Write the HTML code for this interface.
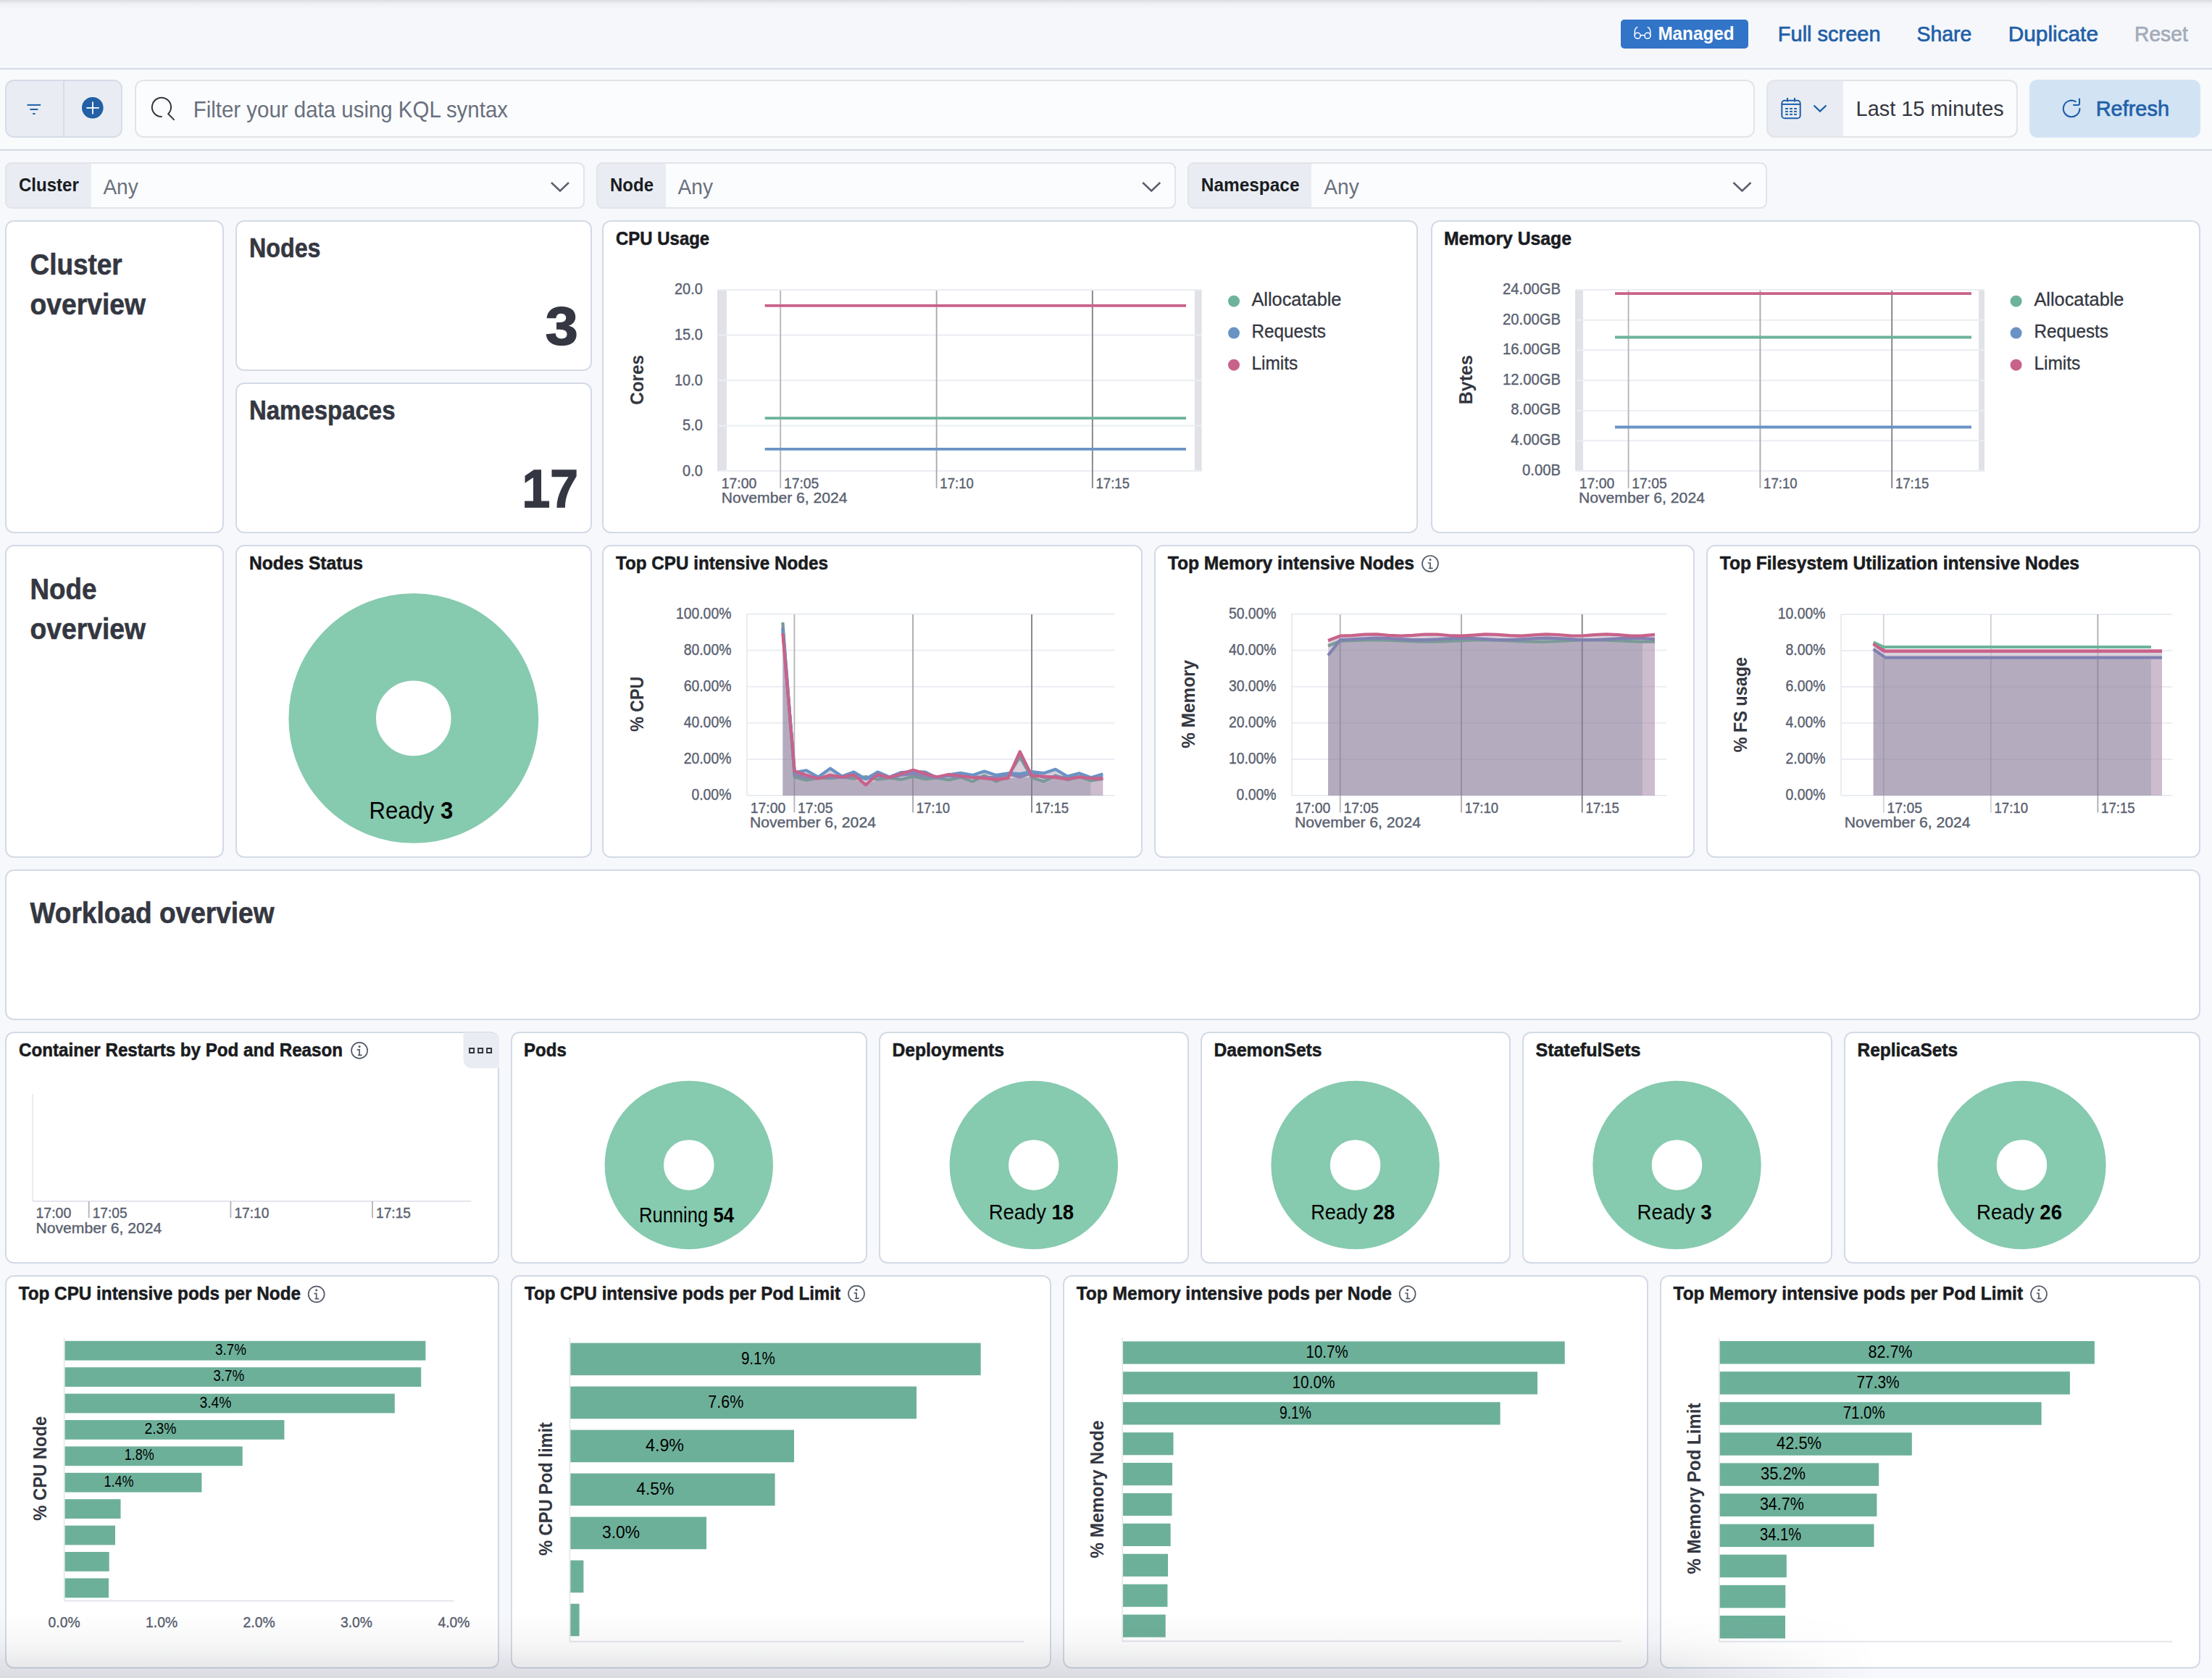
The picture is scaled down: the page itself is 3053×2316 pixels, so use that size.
<!DOCTYPE html><html><head><meta charset="utf-8"><title>Kubernetes Overview</title><style>
html,body{margin:0;padding:0;}
body{width:3053px;height:2316px;overflow:hidden;position:relative;background:#f7f8fc;font-family:"Liberation Sans", sans-serif;}
.abs{position:absolute;}
.panel{position:absolute;background:#fff;border-radius:12px;box-shadow:inset 0 0 0 2px #d3dae6;}
svg{display:block;font-family:"Liberation Sans", sans-serif;}
#hdr{position:absolute;left:0;top:0;width:3053px;height:94px;background:#f6f7fa;border-bottom:2px solid #d3dae6;}
#hdr::before{content:"";position:absolute;left:0;top:0;right:0;height:12px;background:linear-gradient(to bottom,rgba(60,64,80,0.15),rgba(60,64,80,0.04) 40%,rgba(60,64,80,0));}
#qbar{position:absolute;left:0;top:96px;width:3053px;height:110px;background:#f9fafc;border-bottom:2px solid #d3dae6;}
#fade{position:absolute;left:0;top:2226px;width:2720px;height:90px;pointer-events:none;
  background:linear-gradient(to bottom,rgba(40,45,60,0) 0%,rgba(40,45,60,0.035) 45%,rgba(40,45,60,0.14) 100%);
  -webkit-mask-image:linear-gradient(to right,#000 0,#000 2260px,rgba(0,0,0,0.5) 2410px,transparent 2590px);
  mask-image:linear-gradient(to right,#000 0,#000 2260px,rgba(0,0,0,0.5) 2410px,transparent 2590px);}
</style></head><body><div id="hdr"></div><div id="qbar"></div><div class="abs" style="left:2200px;top:0px;width:853px;height:95px;"><svg width="853" height="95" viewBox="2200 0 853 95"><rect x="2237.0" y="27.0" width="176.0" height="40.0" fill="#3274c8" rx="5" /><g fill="none" stroke="#fff" stroke-width="1.5" stroke-linecap="round"><circle cx="2260.2" cy="49.3" r="4.0"/><circle cx="2273.9" cy="49.3" r="4.0"/><path d="M2264.2 49.3 Q2267.05 47.6 2269.9 49.3"/><path d="M2256.3 49.3 V43.5 Q2256.6 38.6 2259.8 37.6"/><path d="M2277.8 49.3 V43.5 Q2277.5 38.6 2274.3 37.6"/></g><text x="2288.4" y="54.8" font-size="25.58" fill="#ffffff" font-weight="700" textLength="105.2" lengthAdjust="spacingAndGlyphs">Managed</text><text x="2453.8" y="57.0" font-size="29.94" fill="#1f5fa8" textLength="141.8" lengthAdjust="spacingAndGlyphs" stroke="#1f5fa8" stroke-width="0.7">Full screen</text><text x="2645.5" y="57.0" font-size="29.94" fill="#1f5fa8" textLength="75.9" lengthAdjust="spacingAndGlyphs" stroke="#1f5fa8" stroke-width="0.7">Share</text><text x="2771.7" y="57.0" font-size="29.94" fill="#1f5fa8" textLength="124.3" lengthAdjust="spacingAndGlyphs" stroke="#1f5fa8" stroke-width="0.7">Duplicate</text><text x="2946.0" y="57.0" font-size="29.94" fill="#a2abba" textLength="73.8" lengthAdjust="spacingAndGlyphs" stroke="#a2abba" stroke-width="0.7">Reset</text></svg></div><div class="abs" style="left:0px;top:96px;width:3053px;height:110px;"><svg width="3053" height="110" viewBox="0 96 3053 110"><rect x="8.0" y="111.0" width="160.0" height="78.0" fill="#e9edf3" rx="11" stroke="#d5dbe7" stroke-width="1.8"/><line x1="88.0" y1="111.0" x2="88.0" y2="189.0" stroke="#d5dbe7" stroke-width="1.8" /><line x1="37.5" y1="144.9" x2="56.2" y2="144.9" stroke="#1f5fa8" stroke-width="2.0" /><line x1="41.4" y1="151.0" x2="52.3" y2="151.0" stroke="#1f5fa8" stroke-width="2.0" /><line x1="45.2" y1="157.0" x2="48.6" y2="157.0" stroke="#1f5fa8" stroke-width="2.0" /><circle cx="127.8" cy="148.8" r="14.8" fill="#2360a5"/><line x1="119.3" y1="148.9" x2="136.7" y2="148.9" stroke="#fff" stroke-width="1.8" /><line x1="128.0" y1="140.4" x2="128.0" y2="157.4" stroke="#fff" stroke-width="1.8" /><rect x="187.0" y="111.0" width="2234.0" height="78.0" fill="#fbfcfd" rx="11" stroke="#e3e4e8" stroke-width="2"/><path d="M222.9 161 A13.1 13.1 0 1 1 232.2 157.2 L240 165.1" fill="none" stroke="#343741" stroke-width="2" stroke-linecap="round" stroke-linejoin="miter"/><text x="266.7" y="161.5" font-size="30.96" fill="#69707d" textLength="434.3" lengthAdjust="spacingAndGlyphs">Filter your data using KQL syntax</text><rect x="2439.0" y="111.0" width="345.0" height="78.0" fill="#fbfcfd" rx="11" stroke="#e3e4e8" stroke-width="2"/><path d="M2450 111 H2544 V189 H2450 A11 11 0 0 1 2439 178 V122 A11 11 0 0 1 2450 111 Z" fill="#e9edf3"/><rect x="2439.0" y="111.0" width="345.0" height="78.0" fill="none" rx="11" stroke="#e3e4e8" stroke-width="2"/><g fill="none" stroke="#1f5fa8" stroke-width="2"><rect x="2459.3" y="138.8" width="25.4" height="24.4" rx="3.8"/><line x1="2459.3" y1="143.9" x2="2484.7" y2="143.9"/><line x1="2467" y1="135" x2="2467" y2="140.6"/><line x1="2477" y1="135" x2="2477" y2="140.6"/></g><rect x="2464.1" y="149.0" width="3.8" height="2.0" fill="#1f5fa8" /><rect x="2470.1" y="149.0" width="3.8" height="2.0" fill="#1f5fa8" /><rect x="2476.1" y="149.0" width="3.8" height="2.0" fill="#1f5fa8" /><rect x="2464.1" y="152.9" width="3.8" height="2.0" fill="#1f5fa8" /><rect x="2470.1" y="152.9" width="3.8" height="2.0" fill="#1f5fa8" /><rect x="2476.1" y="152.9" width="3.8" height="2.0" fill="#1f5fa8" /><rect x="2464.1" y="156.9" width="3.8" height="2.0" fill="#1f5fa8" /><rect x="2470.1" y="156.9" width="3.8" height="2.0" fill="#1f5fa8" /><rect x="2476.1" y="156.9" width="3.8" height="2.0" fill="#1f5fa8" /><path d="M2503.5 145.5 L2512 153.5 L2520.5 145.5" fill="none" stroke="#1f5fa8" stroke-width="2.4"/><text x="2561.6" y="160.0" font-size="29.94" fill="#343741" textLength="204.1" lengthAdjust="spacingAndGlyphs">Last 15 minutes</text><rect x="2801.0" y="110.0" width="236.0" height="80.0" fill="#d2e3f4" rx="11" /><path d="M2870.4 150 A11.3 11.3 0 1 1 2864.75 140.2" fill="none" stroke="#1f5fa8" stroke-width="2.1" stroke-linecap="round"/><path d="M2870 136.5 V143 Q2870 145 2868 145 H2862" fill="none" stroke="#1f5fa8" stroke-width="2.1" stroke-linecap="round"/><text x="2892.7" y="160.0" font-size="29.94" fill="#1f5fa8" textLength="101.3" lengthAdjust="spacingAndGlyphs" stroke="#1f5fa8" stroke-width="0.7">Refresh</text></svg></div><div class="abs" style="left:0px;top:206px;width:3053px;height:94px;"><svg width="3053" height="94" viewBox="0 206 3053 94"><rect x="8.0" y="225.0" width="798.0" height="62.0" fill="#fbfcfd" rx="8" stroke="#e3e4e8" stroke-width="2"/><path d="M16 225 H126 V287 H16 A8 8 0 0 1 8 279 V233 A8 8 0 0 1 16 225 Z" fill="#e9edf3"/><rect x="8.0" y="225.0" width="798.0" height="62.0" fill="none" rx="8" stroke="#e3e4e8" stroke-width="2"/><text x="26.0" y="264.4" font-size="26.16" fill="#1a1c21" font-weight="700" textLength="82.8" lengthAdjust="spacingAndGlyphs">Cluster</text><text x="142.4" y="268.2" font-size="29.36" fill="#69707d" textLength="48.4" lengthAdjust="spacingAndGlyphs">Any</text><path d="M761.0 252 L773.0 263.5 L785.0 252" fill="none" stroke="#5a606b" stroke-width="2.6"/><rect x="824.0" y="225.0" width="798.0" height="62.0" fill="#fbfcfd" rx="8" stroke="#e3e4e8" stroke-width="2"/><path d="M832 225 H919 V287 H832 A8 8 0 0 1 824 279 V233 A8 8 0 0 1 832 225 Z" fill="#e9edf3"/><rect x="824.0" y="225.0" width="798.0" height="62.0" fill="none" rx="8" stroke="#e3e4e8" stroke-width="2"/><text x="842.0" y="264.4" font-size="26.16" fill="#1a1c21" font-weight="700" textLength="60.0" lengthAdjust="spacingAndGlyphs">Node</text><text x="935.6" y="268.2" font-size="29.36" fill="#69707d" textLength="48.4" lengthAdjust="spacingAndGlyphs">Any</text><path d="M1577.2 252 L1589.2 263.5 L1601.2 252" fill="none" stroke="#5a606b" stroke-width="2.6"/><rect x="1640.0" y="225.0" width="798.0" height="62.0" fill="#fbfcfd" rx="8" stroke="#e3e4e8" stroke-width="2"/><path d="M1648 225 H1810 V287 H1648 A8 8 0 0 1 1640 279 V233 A8 8 0 0 1 1648 225 Z" fill="#e9edf3"/><rect x="1640.0" y="225.0" width="798.0" height="62.0" fill="none" rx="8" stroke="#e3e4e8" stroke-width="2"/><text x="1657.8" y="264.4" font-size="26.16" fill="#1a1c21" font-weight="700" textLength="135.7" lengthAdjust="spacingAndGlyphs">Namespace</text><text x="1827.3" y="268.2" font-size="29.36" fill="#69707d" textLength="48.4" lengthAdjust="spacingAndGlyphs">Any</text><path d="M2392.5 252 L2404.5 263.5 L2416.5 252" fill="none" stroke="#5a606b" stroke-width="2.6"/></svg></div><div class="panel" style="left:7px;top:304px;width:302px;height:432px;"><svg width="302" height="432" viewBox="7 304 302 432"><text x="41.5" y="379.0" font-size="39.97" fill="#343741" font-weight="700" textLength="127.2" lengthAdjust="spacingAndGlyphs" stroke="#343741" stroke-width="0.6">Cluster</text><text x="41.5" y="434.0" font-size="39.97" fill="#343741" font-weight="700" textLength="159.5" lengthAdjust="spacingAndGlyphs" stroke="#343741" stroke-width="0.6">overview</text></svg></div><div class="panel" style="left:325px;top:304px;width:492px;height:208px;"><svg width="492" height="208" viewBox="325 304 492 208"><text x="344.0" y="354.5" font-size="37.06" fill="#343741" font-weight="700" textLength="98.5" lengthAdjust="spacingAndGlyphs" stroke="#343741" stroke-width="0.6">Nodes</text><text x="797.8" y="476.4" font-size="74.85" fill="#343741" font-weight="700" text-anchor="end" textLength="45.0" lengthAdjust="spacingAndGlyphs" stroke="#343741" stroke-width="1.6">3</text></svg></div><div class="panel" style="left:325px;top:528px;width:492px;height:208px;"><svg width="492" height="208" viewBox="325 528 492 208"><text x="344.0" y="579.0" font-size="37.06" fill="#343741" font-weight="700" textLength="201.5" lengthAdjust="spacingAndGlyphs" stroke="#343741" stroke-width="0.6">Namespaces</text><text x="798.0" y="699.6" font-size="74.85" fill="#343741" font-weight="700" text-anchor="end" textLength="77.5" lengthAdjust="spacingAndGlyphs" stroke="#343741" stroke-width="1.6">17</text></svg></div><div class="panel" style="left:831px;top:304px;width:1126px;height:432px;"><svg width="1126" height="432" viewBox="831 304 1126 432"><text x="850.0" y="337.8" font-size="25.87" fill="#1a1c21" font-weight="700" textLength="129.2" lengthAdjust="spacingAndGlyphs" stroke="#1a1c21" stroke-width="0.55">CPU Usage</text><rect x="991.0" y="400.0" width="12.0" height="250.0" fill="#e0e2e7" /><rect x="1649.0" y="400.0" width="9.6" height="250.0" fill="#e0e2e7" /><line x1="991.0" y1="400.0" x2="1658.6" y2="400.0" stroke="#eaedf2" stroke-width="2" /><line x1="991.0" y1="462.5" x2="1658.6" y2="462.5" stroke="#eaedf2" stroke-width="2" /><line x1="991.0" y1="525.0" x2="1658.6" y2="525.0" stroke="#eaedf2" stroke-width="2" /><line x1="991.0" y1="587.5" x2="1658.6" y2="587.5" stroke="#eaedf2" stroke-width="2" /><line x1="991.0" y1="650.0" x2="1658.6" y2="650.0" stroke="#eaedf2" stroke-width="2" /><line x1="991.0" y1="400.0" x2="991.0" y2="650.0" stroke="#d9dde5" stroke-width="1.5" /><text x="995.7" y="673.7" font-size="20.93" fill="#5a6170" textLength="48.5" lengthAdjust="spacingAndGlyphs" stroke="#5a6170" stroke-width="0.4">17:00</text><line x1="1077.2" y1="401.0" x2="1077.2" y2="673.7" stroke="#b3b4b8" stroke-width="1.8" /><text x="1081.9" y="673.7" font-size="20.93" fill="#5a6170" textLength="48.5" lengthAdjust="spacingAndGlyphs" stroke="#5a6170" stroke-width="0.4">17:05</text><line x1="1292.6" y1="401.0" x2="1292.6" y2="673.7" stroke="#a7a8ac" stroke-width="1.8" /><text x="1297.3" y="673.7" font-size="20.93" fill="#5a6170" textLength="46.5" lengthAdjust="spacingAndGlyphs" stroke="#5a6170" stroke-width="0.4">17:10</text><line x1="1507.8" y1="401.0" x2="1507.8" y2="673.7" stroke="#7d7e83" stroke-width="1.8" /><text x="1512.5" y="673.7" font-size="20.93" fill="#5a6170" textLength="46.5" lengthAdjust="spacingAndGlyphs" stroke="#5a6170" stroke-width="0.4">17:15</text><text x="995.7" y="693.8" font-size="20.93" fill="#5a6170" textLength="173.9" lengthAdjust="spacingAndGlyphs" stroke="#5a6170" stroke-width="0.4">November 6, 2024</text><polyline points="1055.7,421.8 1637.0,421.8" fill="none" stroke="#c8628a" stroke-width="3.8" stroke-linejoin="round" /><polyline points="1055.7,577.2 1637.0,577.2" fill="none" stroke="#6db39a" stroke-width="3.8" stroke-linejoin="round" /><polyline points="1055.7,619.8 1637.0,619.8" fill="none" stroke="#6993c4" stroke-width="3.8" stroke-linejoin="round" /><text x="969.8" y="405.9" font-size="21.66" fill="#5a6170" text-anchor="end" textLength="38.8" lengthAdjust="spacingAndGlyphs" stroke="#5a6170" stroke-width="0.4">20.0</text><text x="969.8" y="468.9" font-size="21.66" fill="#5a6170" text-anchor="end" textLength="38.8" lengthAdjust="spacingAndGlyphs" stroke="#5a6170" stroke-width="0.4">15.0</text><text x="969.8" y="531.5" font-size="21.66" fill="#5a6170" text-anchor="end" textLength="38.8" lengthAdjust="spacingAndGlyphs" stroke="#5a6170" stroke-width="0.4">10.0</text><text x="969.8" y="594.0" font-size="21.66" fill="#5a6170" text-anchor="end" textLength="27.7" lengthAdjust="spacingAndGlyphs" stroke="#5a6170" stroke-width="0.4">5.0</text><text x="969.8" y="656.5" font-size="21.66" fill="#5a6170" text-anchor="end" textLength="27.7" lengthAdjust="spacingAndGlyphs" stroke="#5a6170" stroke-width="0.4">0.0</text><text transform="translate(888.3,524.4) rotate(-90)" x="0" y="0" font-size="26.45" font-weight="700" fill="#343741" text-anchor="middle" textLength="68.9" lengthAdjust="spacingAndGlyphs">Cores</text><circle cx="1703" cy="415.7" r="8" fill="#6db39a"/><text x="1727.4" y="421.9" font-size="25.44" fill="#343741" textLength="124.1" lengthAdjust="spacingAndGlyphs" stroke="#343741" stroke-width="0.3">Allocatable</text><circle cx="1703" cy="459.6" r="8" fill="#6993c4"/><text x="1727.4" y="466.2" font-size="25.44" fill="#343741" textLength="102.5" lengthAdjust="spacingAndGlyphs" stroke="#343741" stroke-width="0.3">Requests</text><circle cx="1703" cy="503.7" r="8" fill="#c8628a"/><text x="1727.4" y="510.1" font-size="25.44" fill="#343741" textLength="63.9" lengthAdjust="spacingAndGlyphs" stroke="#343741" stroke-width="0.3">Limits</text></svg></div><div class="panel" style="left:1975px;top:304px;width:1062px;height:432px;"><svg width="1062" height="432" viewBox="1975 304 1062 432"><text x="1993.0" y="337.8" font-size="25.87" fill="#1a1c21" font-weight="700" textLength="176.0" lengthAdjust="spacingAndGlyphs" stroke="#1a1c21" stroke-width="0.55">Memory Usage</text><rect x="2175.0" y="400.0" width="10.0" height="250.0" fill="#e0e2e7" /><rect x="2731.0" y="400.0" width="8.0" height="250.0" fill="#e0e2e7" /><line x1="2175.0" y1="400.0" x2="2739.0" y2="400.0" stroke="#eaedf2" stroke-width="2" /><line x1="2175.0" y1="441.7" x2="2739.0" y2="441.7" stroke="#eaedf2" stroke-width="2" /><line x1="2175.0" y1="483.3" x2="2739.0" y2="483.3" stroke="#eaedf2" stroke-width="2" /><line x1="2175.0" y1="525.0" x2="2739.0" y2="525.0" stroke="#eaedf2" stroke-width="2" /><line x1="2175.0" y1="566.7" x2="2739.0" y2="566.7" stroke="#eaedf2" stroke-width="2" /><line x1="2175.0" y1="608.3" x2="2739.0" y2="608.3" stroke="#eaedf2" stroke-width="2" /><line x1="2175.0" y1="650.0" x2="2739.0" y2="650.0" stroke="#eaedf2" stroke-width="2" /><line x1="2175.0" y1="400.0" x2="2175.0" y2="650.0" stroke="#d9dde5" stroke-width="1.5" /><text x="2179.7" y="673.7" font-size="20.93" fill="#5a6170" textLength="48.5" lengthAdjust="spacingAndGlyphs" stroke="#5a6170" stroke-width="0.4">17:00</text><line x1="2247.6" y1="401.0" x2="2247.6" y2="673.7" stroke="#b3b4b8" stroke-width="1.8" /><text x="2252.3" y="673.7" font-size="20.93" fill="#5a6170" textLength="48.5" lengthAdjust="spacingAndGlyphs" stroke="#5a6170" stroke-width="0.4">17:05</text><line x1="2429.4" y1="401.0" x2="2429.4" y2="673.7" stroke="#a7a8ac" stroke-width="1.8" /><text x="2434.1" y="673.7" font-size="20.93" fill="#5a6170" textLength="46.5" lengthAdjust="spacingAndGlyphs" stroke="#5a6170" stroke-width="0.4">17:10</text><line x1="2611.2" y1="401.0" x2="2611.2" y2="673.7" stroke="#7d7e83" stroke-width="1.8" /><text x="2615.9" y="673.7" font-size="20.93" fill="#5a6170" textLength="46.5" lengthAdjust="spacingAndGlyphs" stroke="#5a6170" stroke-width="0.4">17:15</text><text x="2179.0" y="693.8" font-size="20.93" fill="#5a6170" textLength="173.9" lengthAdjust="spacingAndGlyphs" stroke="#5a6170" stroke-width="0.4">November 6, 2024</text><polyline points="2229.0,405.2 2721.0,405.2" fill="none" stroke="#c8628a" stroke-width="3.8" stroke-linejoin="round" /><polyline points="2229.0,465.5 2721.0,465.5" fill="none" stroke="#6db39a" stroke-width="3.8" stroke-linejoin="round" /><polyline points="2229.0,589.5 2721.0,589.5" fill="none" stroke="#6993c4" stroke-width="3.8" stroke-linejoin="round" /><text x="2154.0" y="406.1" font-size="21.66" fill="#5a6170" text-anchor="end" textLength="79.9" lengthAdjust="spacingAndGlyphs" stroke="#5a6170" stroke-width="0.4">24.00GB</text><text x="2154.0" y="447.7" font-size="21.66" fill="#5a6170" text-anchor="end" textLength="79.9" lengthAdjust="spacingAndGlyphs" stroke="#5a6170" stroke-width="0.4">20.00GB</text><text x="2154.0" y="489.2" font-size="21.66" fill="#5a6170" text-anchor="end" textLength="79.9" lengthAdjust="spacingAndGlyphs" stroke="#5a6170" stroke-width="0.4">16.00GB</text><text x="2154.0" y="530.8" font-size="21.66" fill="#5a6170" text-anchor="end" textLength="79.9" lengthAdjust="spacingAndGlyphs" stroke="#5a6170" stroke-width="0.4">12.00GB</text><text x="2154.0" y="572.4" font-size="21.66" fill="#5a6170" text-anchor="end" textLength="68.7" lengthAdjust="spacingAndGlyphs" stroke="#5a6170" stroke-width="0.4">8.00GB</text><text x="2154.0" y="613.9" font-size="21.66" fill="#5a6170" text-anchor="end" textLength="68.7" lengthAdjust="spacingAndGlyphs" stroke="#5a6170" stroke-width="0.4">4.00GB</text><text x="2154.0" y="655.5" font-size="21.66" fill="#5a6170" text-anchor="end" textLength="52.9" lengthAdjust="spacingAndGlyphs" stroke="#5a6170" stroke-width="0.4">0.00B</text><text transform="translate(2031.6,524.2) rotate(-90)" x="0" y="0" font-size="26.45" font-weight="700" fill="#343741" text-anchor="middle" textLength="68.2" lengthAdjust="spacingAndGlyphs">Bytes</text><circle cx="2782.6" cy="415.7" r="8" fill="#6db39a"/><text x="2807.4" y="421.9" font-size="25.44" fill="#343741" textLength="124.1" lengthAdjust="spacingAndGlyphs" stroke="#343741" stroke-width="0.3">Allocatable</text><circle cx="2782.6" cy="459.6" r="8" fill="#6993c4"/><text x="2807.4" y="466.2" font-size="25.44" fill="#343741" textLength="102.5" lengthAdjust="spacingAndGlyphs" stroke="#343741" stroke-width="0.3">Requests</text><circle cx="2782.6" cy="503.7" r="8" fill="#c8628a"/><text x="2807.4" y="510.1" font-size="25.44" fill="#343741" textLength="63.9" lengthAdjust="spacingAndGlyphs" stroke="#343741" stroke-width="0.3">Limits</text></svg></div><div class="panel" style="left:7px;top:752px;width:302px;height:432px;"><svg width="302" height="432" viewBox="7 752 302 432"><text x="41.5" y="827.0" font-size="39.97" fill="#343741" font-weight="700" textLength="91.9" lengthAdjust="spacingAndGlyphs" stroke="#343741" stroke-width="0.6">Node</text><text x="41.5" y="882.0" font-size="39.97" fill="#343741" font-weight="700" textLength="159.5" lengthAdjust="spacingAndGlyphs" stroke="#343741" stroke-width="0.6">overview</text></svg></div><div class="panel" style="left:325px;top:752px;width:492px;height:432px;"><svg width="492" height="432" viewBox="325 752 492 432"><text x="344.0" y="786.0" font-size="25.87" fill="#1a1c21" font-weight="700" textLength="157.0" lengthAdjust="spacingAndGlyphs" stroke="#1a1c21" stroke-width="0.55">Nodes Status</text><circle cx="570.8" cy="991.4" r="112.10" fill="none" stroke="#86caaf" stroke-width="120.60"/><text x="567.4" y="1130.4" font-size="33.14" fill="#000" text-anchor="middle" textLength="115.8" lengthAdjust="spacingAndGlyphs">Ready <tspan font-weight="700">3</tspan></text></svg></div><div class="panel" style="left:831px;top:752px;width:746px;height:432px;"><svg width="746" height="432" viewBox="831 752 746 432"><text x="850.0" y="786.0" font-size="25.87" fill="#1a1c21" font-weight="700" textLength="293.0" lengthAdjust="spacingAndGlyphs" stroke="#1a1c21" stroke-width="0.55">Top CPU intensive Nodes</text><line x1="1031.0" y1="847.5" x2="1538.6" y2="847.5" stroke="#eaedf2" stroke-width="2" /><line x1="1031.0" y1="897.6" x2="1538.6" y2="897.6" stroke="#eaedf2" stroke-width="2" /><line x1="1031.0" y1="947.7" x2="1538.6" y2="947.7" stroke="#eaedf2" stroke-width="2" /><line x1="1031.0" y1="997.8" x2="1538.6" y2="997.8" stroke="#eaedf2" stroke-width="2" /><line x1="1031.0" y1="1047.9" x2="1538.6" y2="1047.9" stroke="#eaedf2" stroke-width="2" /><line x1="1031.0" y1="1098.0" x2="1538.6" y2="1098.0" stroke="#eaedf2" stroke-width="2" /><line x1="1031.0" y1="847.5" x2="1031.0" y2="1098.0" stroke="#e3e6ec" stroke-width="1.5" /><text x="1035.7" y="1121.5" font-size="20.93" fill="#5a6170" textLength="48.5" lengthAdjust="spacingAndGlyphs" stroke="#5a6170" stroke-width="0.4">17:00</text><line x1="1096.4" y1="848.0" x2="1096.4" y2="1121.5" stroke="#b3b4b8" stroke-width="1.8" /><text x="1101.1" y="1121.5" font-size="20.93" fill="#5a6170" textLength="48.5" lengthAdjust="spacingAndGlyphs" stroke="#5a6170" stroke-width="0.4">17:05</text><line x1="1260.0" y1="848.0" x2="1260.0" y2="1121.5" stroke="#a7a8ac" stroke-width="1.8" /><text x="1264.7" y="1121.5" font-size="20.93" fill="#5a6170" textLength="46.5" lengthAdjust="spacingAndGlyphs" stroke="#5a6170" stroke-width="0.4">17:10</text><line x1="1424.0" y1="848.0" x2="1424.0" y2="1121.5" stroke="#7d7e83" stroke-width="1.8" /><text x="1428.7" y="1121.5" font-size="20.93" fill="#5a6170" textLength="46.5" lengthAdjust="spacingAndGlyphs" stroke="#5a6170" stroke-width="0.4">17:15</text><text x="1035.0" y="1141.5" font-size="20.93" fill="#5a6170" textLength="173.9" lengthAdjust="spacingAndGlyphs" stroke="#5a6170" stroke-width="0.4">November 6, 2024</text><polygon points="1080.3,859.0 1096.7,1064.4 1113.0,1063.3 1129.4,1072.5 1145.8,1060.6 1162.1,1071.5 1178.5,1065.5 1194.9,1072.0 1211.3,1065.5 1227.6,1072.5 1244.0,1066.0 1260.4,1062.8 1276.7,1065.5 1293.1,1072.0 1309.5,1068.8 1325.8,1066.7 1342.2,1069.9 1358.6,1064.5 1375.0,1069.9 1391.3,1067.2 1407.7,1037.4 1424.1,1065.0 1440.4,1067.2 1456.8,1061.8 1473.2,1071.5 1489.5,1067.2 1505.9,1073.2 1522.3,1068.3 1522.3,1075.0 1505.9,1077.5 1489.5,1072.6 1473.2,1076.4 1456.8,1073.2 1440.4,1078.6 1424.1,1073.2 1407.7,1072.6 1391.3,1074.2 1375.0,1078.6 1358.6,1074.2 1342.2,1078.6 1325.8,1072.6 1309.5,1076.4 1293.1,1073.6 1276.7,1075.3 1260.4,1071.5 1244.0,1075.8 1227.6,1073.6 1211.3,1075.8 1194.9,1083.4 1178.5,1074.7 1162.1,1073.0 1145.8,1074.2 1129.4,1074.7 1113.0,1076.9 1096.7,1072.5 1080.3,874.0" fill="rgb(192,177,197)" fill-opacity="0.6"/><polygon points="1080.3,874.0 1096.7,1072.5 1113.0,1076.9 1129.4,1074.7 1145.8,1074.2 1162.1,1073.0 1178.5,1074.7 1194.9,1083.4 1211.3,1075.8 1227.6,1073.6 1244.0,1075.8 1260.4,1071.5 1276.7,1075.3 1293.1,1073.6 1309.5,1076.4 1325.8,1072.6 1342.2,1078.6 1358.6,1074.2 1375.0,1078.6 1391.3,1074.2 1407.7,1072.6 1424.1,1073.2 1440.4,1078.6 1456.8,1073.2 1473.2,1076.4 1489.5,1072.6 1505.8,1077.5 1505.8,1098.0 1080.3,1098.0" fill="rgb(130,117,147)" fill-opacity="0.6"/><polygon points="1505.8,1077.5 1505.9,1077.5 1522.3,1075.0 1522.3,1098.0 1505.8,1098.0" fill="rgb(172,143,172)" fill-opacity="0.6"/><polyline points="1080.3,859.0 1096.7,1072.5 1113.0,1076.9 1129.4,1073.6 1145.8,1074.2 1162.1,1072.5 1178.5,1074.7 1194.9,1072.0 1211.3,1075.8 1227.6,1073.6 1244.0,1075.8 1260.4,1071.5 1276.7,1075.3 1293.1,1073.6 1309.5,1076.4 1325.8,1072.6 1342.2,1078.6 1358.6,1070.4 1375.0,1078.6 1391.3,1071.0 1407.7,1045.0 1424.1,1073.2 1440.4,1078.6 1456.8,1070.4 1473.2,1076.4 1489.5,1072.1 1505.9,1077.5 1522.3,1075.0" fill="none" stroke="#7a9899" stroke-width="4.2" stroke-linejoin="round" /><polyline points="1080.3,866.0 1096.7,1069.0 1113.0,1073.0 1129.4,1074.0 1145.8,1072.0 1162.1,1073.0 1178.5,1071.0 1194.9,1075.0 1211.3,1071.0 1227.6,1073.0 1244.0,1070.0 1260.4,1068.0 1276.7,1071.0 1293.1,1072.0 1309.5,1071.0 1325.8,1072.0 1342.2,1072.0 1358.6,1073.0 1375.0,1073.0 1391.3,1068.0 1407.7,1072.6 1424.1,1066.7 1440.4,1073.0 1456.8,1072.0 1473.2,1073.0 1489.5,1072.0 1505.9,1074.0 1522.3,1073.0" fill="none" stroke="#8a83b3" stroke-width="4.2" stroke-linejoin="round" /><polyline points="1080.3,868.0 1096.7,1066.0 1113.0,1063.3 1129.4,1072.5 1145.8,1060.6 1162.1,1071.5 1178.5,1065.5 1194.9,1075.3 1211.3,1065.5 1227.6,1072.5 1244.0,1066.0 1260.4,1065.0 1276.7,1065.5 1293.1,1073.6 1309.5,1069.4 1325.8,1066.7 1342.2,1069.9 1358.6,1064.5 1375.0,1069.9 1391.3,1067.2 1407.7,1068.0 1424.1,1065.0 1440.4,1067.2 1456.8,1061.8 1473.2,1071.5 1489.5,1067.2 1505.9,1073.2 1522.3,1068.3" fill="none" stroke="#6993c4" stroke-width="4.2" stroke-linejoin="round" /><polyline points="1080.3,874.0 1096.7,1064.4 1113.0,1069.8 1129.4,1074.7 1145.8,1069.8 1162.1,1072.5 1178.5,1069.3 1194.9,1083.4 1211.3,1068.8 1227.6,1073.1 1244.0,1067.7 1260.4,1062.8 1276.7,1067.7 1293.1,1072.5 1309.5,1068.8 1325.8,1071.0 1342.2,1073.2 1358.6,1074.2 1375.0,1075.9 1391.3,1074.2 1407.7,1037.4 1424.1,1071.0 1440.4,1071.5 1456.8,1073.2 1473.2,1075.3 1489.5,1072.6 1505.9,1074.2 1522.3,1074.8" fill="none" stroke="#c8628a" stroke-width="4.2" stroke-linejoin="round" /><text x="1009.4" y="853.6" font-size="21.66" fill="#5a6170" text-anchor="end" textLength="76.5" lengthAdjust="spacingAndGlyphs" stroke="#5a6170" stroke-width="0.4">100.00%</text><text x="1009.4" y="903.7" font-size="21.66" fill="#5a6170" text-anchor="end" textLength="65.7" lengthAdjust="spacingAndGlyphs" stroke="#5a6170" stroke-width="0.4">80.00%</text><text x="1009.4" y="953.8" font-size="21.66" fill="#5a6170" text-anchor="end" textLength="65.7" lengthAdjust="spacingAndGlyphs" stroke="#5a6170" stroke-width="0.4">60.00%</text><text x="1009.4" y="1003.9" font-size="21.66" fill="#5a6170" text-anchor="end" textLength="65.7" lengthAdjust="spacingAndGlyphs" stroke="#5a6170" stroke-width="0.4">40.00%</text><text x="1009.4" y="1054.0" font-size="21.66" fill="#5a6170" text-anchor="end" textLength="65.7" lengthAdjust="spacingAndGlyphs" stroke="#5a6170" stroke-width="0.4">20.00%</text><text x="1009.4" y="1104.0" font-size="21.66" fill="#5a6170" text-anchor="end" textLength="55.0" lengthAdjust="spacingAndGlyphs" stroke="#5a6170" stroke-width="0.4">0.00%</text><text transform="translate(887.5,971.8) rotate(-90)" x="0" y="0" font-size="26.45" font-weight="700" fill="#343741" text-anchor="middle" textLength="75.8" lengthAdjust="spacingAndGlyphs">% CPU</text></svg></div><div class="panel" style="left:1593px;top:752px;width:746px;height:432px;"><svg width="746" height="432" viewBox="1593 752 746 432"><text x="1611.7" y="786.0" font-size="25.87" fill="#1a1c21" font-weight="700" textLength="340.3" lengthAdjust="spacingAndGlyphs" stroke="#1a1c21" stroke-width="0.55">Top Memory intensive Nodes</text><circle cx="1974" cy="778" r="11.0" fill="none" stroke="#535966" stroke-width="1.7"/><circle cx="1974" cy="772.5" r="1.5" fill="#535966"/><path d="M1970.7 777 H1974 V784.4 M1971.8 784.4 H1977.6" fill="none" stroke="#535966" stroke-width="1.7"/><line x1="1783.0" y1="847.5" x2="2300.4" y2="847.5" stroke="#eaedf2" stroke-width="2" /><line x1="1783.0" y1="897.6" x2="2300.4" y2="897.6" stroke="#eaedf2" stroke-width="2" /><line x1="1783.0" y1="947.7" x2="2300.4" y2="947.7" stroke="#eaedf2" stroke-width="2" /><line x1="1783.0" y1="997.8" x2="2300.4" y2="997.8" stroke="#eaedf2" stroke-width="2" /><line x1="1783.0" y1="1047.9" x2="2300.4" y2="1047.9" stroke="#eaedf2" stroke-width="2" /><line x1="1783.0" y1="1098.0" x2="2300.4" y2="1098.0" stroke="#eaedf2" stroke-width="2" /><line x1="1783.0" y1="847.5" x2="1783.0" y2="1098.0" stroke="#e3e6ec" stroke-width="1.5" /><text x="1787.7" y="1121.5" font-size="20.93" fill="#5a6170" textLength="48.5" lengthAdjust="spacingAndGlyphs" stroke="#5a6170" stroke-width="0.4">17:00</text><line x1="1849.7" y1="848.0" x2="1849.7" y2="1121.5" stroke="#b3b4b8" stroke-width="1.8" /><text x="1854.4" y="1121.5" font-size="20.93" fill="#5a6170" textLength="48.5" lengthAdjust="spacingAndGlyphs" stroke="#5a6170" stroke-width="0.4">17:05</text><line x1="2017.0" y1="848.0" x2="2017.0" y2="1121.5" stroke="#a7a8ac" stroke-width="1.8" /><text x="2021.7" y="1121.5" font-size="20.93" fill="#5a6170" textLength="46.5" lengthAdjust="spacingAndGlyphs" stroke="#5a6170" stroke-width="0.4">17:10</text><line x1="2183.7" y1="848.0" x2="2183.7" y2="1121.5" stroke="#7d7e83" stroke-width="1.8" /><text x="2188.4" y="1121.5" font-size="20.93" fill="#5a6170" textLength="46.5" lengthAdjust="spacingAndGlyphs" stroke="#5a6170" stroke-width="0.4">17:15</text><text x="1787.0" y="1141.5" font-size="20.93" fill="#5a6170" textLength="173.9" lengthAdjust="spacingAndGlyphs" stroke="#5a6170" stroke-width="0.4">November 6, 2024</text><polygon points="1833.0,884.0 1849.7,877.7 1866.4,877.1 1883.1,875.7 1899.8,875.4 1916.5,876.8 1933.2,877.7 1949.9,876.9 1966.6,875.5 1983.3,875.6 2000.0,877.0 2016.7,877.7 2033.4,876.6 2050.1,875.4 2066.9,875.8 2083.6,877.2 2100.3,877.6 2117.0,876.4 2133.7,875.3 2150.4,876.0 2167.1,877.4 2183.8,877.5 2200.5,876.1 2217.2,875.3 2233.9,876.2 2250.6,877.6 2267.3,877.3 2284.0,875.9 2284.0,885.6 2267.3,885.7 2250.6,885.2 2233.9,884.4 2217.2,883.7 2200.5,883.3 2183.8,883.5 2167.1,884.2 2150.4,885.0 2133.7,885.6 2117.0,885.7 2100.3,885.2 2083.6,884.4 2066.9,883.7 2050.1,883.3 2033.4,883.5 2016.7,884.2 2000.0,885.0 1983.3,885.6 1966.6,885.7 1949.9,885.2 1933.2,884.4 1916.5,883.7 1899.8,883.3 1883.1,883.5 1866.4,884.2 1849.7,885.0 1833.0,904.5" fill="rgb(192,177,197)" fill-opacity="0.6"/><polygon points="1833.0,904.5 1849.7,885.0 1866.4,884.2 1883.1,883.5 1899.8,883.3 1916.5,883.7 1933.2,884.4 1949.9,885.2 1966.6,885.7 1983.3,885.6 2000.0,885.0 2016.7,884.2 2033.4,883.5 2050.1,883.3 2066.9,883.7 2083.6,884.4 2100.3,885.2 2117.0,885.7 2133.7,885.6 2150.4,885.0 2167.1,884.2 2183.8,883.5 2200.5,883.3 2217.2,883.7 2233.9,884.4 2250.6,885.2 2267.0,885.7 2267.0,1098.0 1833.0,1098.0" fill="rgb(130,117,147)" fill-opacity="0.6"/><polygon points="2267.0,885.7 2267.3,885.7 2284.0,885.6 2284.0,1098.0 2267.0,1098.0" fill="rgb(172,143,172)" fill-opacity="0.6"/><polyline points="1833.0,891.5 1849.7,885.0 1866.4,884.2 1883.1,883.5 1899.8,883.3 1916.5,883.7 1933.2,884.4 1949.9,885.2 1966.6,885.7 1983.3,885.6 2000.0,885.0 2016.7,884.2 2033.4,883.5 2050.1,883.3 2066.9,883.7 2083.6,884.4 2100.3,885.2 2117.0,885.7 2133.7,885.6 2150.4,885.0 2167.1,884.2 2183.8,883.5 2200.5,883.3 2217.2,883.7 2233.9,884.4 2250.6,885.2 2267.3,885.7 2284.0,885.6" fill="none" stroke="#7b9a98" stroke-width="4.2" stroke-linejoin="round" /><polyline points="1833.0,904.5 1849.7,883.2 1866.4,882.4 1883.1,881.3 1899.8,880.7 1916.5,881.1 1933.2,882.2 1949.9,883.1 1966.6,883.2 1983.3,882.4 2000.0,881.3 2016.7,880.7 2033.4,881.1 2050.1,882.2 2066.9,883.1 2083.6,883.2 2100.3,882.4 2117.0,881.3 2133.7,880.7 2150.4,881.1 2167.1,882.2 2183.8,883.1 2200.5,883.2 2217.2,882.4 2233.9,881.3 2250.6,880.7 2267.3,881.1 2284.0,882.2" fill="none" stroke="#8081b1" stroke-width="4.2" stroke-linejoin="round" /><polyline points="1833.0,884.0 1849.7,877.7 1866.4,877.1 1883.1,875.7 1899.8,875.4 1916.5,876.8 1933.2,877.7 1949.9,876.9 1966.6,875.5 1983.3,875.6 2000.0,877.0 2016.7,877.7 2033.4,876.6 2050.1,875.4 2066.9,875.8 2083.6,877.2 2100.3,877.6 2117.0,876.4 2133.7,875.3 2150.4,876.0 2167.1,877.4 2183.8,877.5 2200.5,876.1 2217.2,875.3 2233.9,876.2 2250.6,877.6 2267.3,877.3 2284.0,875.9" fill="none" stroke="#c8628a" stroke-width="4.2" stroke-linejoin="round" /><text x="1761.6" y="853.6" font-size="21.66" fill="#5a6170" text-anchor="end" textLength="65.7" lengthAdjust="spacingAndGlyphs" stroke="#5a6170" stroke-width="0.4">50.00%</text><text x="1761.6" y="903.7" font-size="21.66" fill="#5a6170" text-anchor="end" textLength="65.7" lengthAdjust="spacingAndGlyphs" stroke="#5a6170" stroke-width="0.4">40.00%</text><text x="1761.6" y="953.8" font-size="21.66" fill="#5a6170" text-anchor="end" textLength="65.7" lengthAdjust="spacingAndGlyphs" stroke="#5a6170" stroke-width="0.4">30.00%</text><text x="1761.6" y="1003.9" font-size="21.66" fill="#5a6170" text-anchor="end" textLength="65.7" lengthAdjust="spacingAndGlyphs" stroke="#5a6170" stroke-width="0.4">20.00%</text><text x="1761.6" y="1054.0" font-size="21.66" fill="#5a6170" text-anchor="end" textLength="65.7" lengthAdjust="spacingAndGlyphs" stroke="#5a6170" stroke-width="0.4">10.00%</text><text x="1761.6" y="1104.0" font-size="21.66" fill="#5a6170" text-anchor="end" textLength="55.0" lengthAdjust="spacingAndGlyphs" stroke="#5a6170" stroke-width="0.4">0.00%</text><text transform="translate(1649.2,971.8) rotate(-90)" x="0" y="0" font-size="26.45" font-weight="700" fill="#343741" text-anchor="middle" textLength="121.7" lengthAdjust="spacingAndGlyphs">% Memory</text></svg></div><div class="panel" style="left:2355px;top:752px;width:682px;height:432px;"><svg width="682" height="432" viewBox="2355 752 682 432"><text x="2373.8" y="786.0" font-size="25.87" fill="#1a1c21" font-weight="700" textLength="496.2" lengthAdjust="spacingAndGlyphs" stroke="#1a1c21" stroke-width="0.55">Top Filesystem Utilization intensive Nodes</text><line x1="2541.0" y1="848.0" x2="2998.5" y2="848.0" stroke="#eaedf2" stroke-width="2" /><line x1="2541.0" y1="898.0" x2="2998.5" y2="898.0" stroke="#eaedf2" stroke-width="2" /><line x1="2541.0" y1="948.0" x2="2998.5" y2="948.0" stroke="#eaedf2" stroke-width="2" /><line x1="2541.0" y1="998.0" x2="2998.5" y2="998.0" stroke="#eaedf2" stroke-width="2" /><line x1="2541.0" y1="1048.0" x2="2998.5" y2="1048.0" stroke="#eaedf2" stroke-width="2" /><line x1="2541.0" y1="1098.0" x2="2998.5" y2="1098.0" stroke="#eaedf2" stroke-width="2" /><line x1="2541.0" y1="848.0" x2="2541.0" y2="1098.0" stroke="#e3e6ec" stroke-width="1.5" /><line x1="2599.8" y1="848.0" x2="2599.8" y2="1121.5" stroke="#d2d3d7" stroke-width="1.8" /><text x="2604.5" y="1121.5" font-size="20.93" fill="#5a6170" textLength="48.5" lengthAdjust="spacingAndGlyphs" stroke="#5a6170" stroke-width="0.4">17:05</text><line x1="2747.8" y1="848.0" x2="2747.8" y2="1121.5" stroke="#cfd0d4" stroke-width="1.8" /><text x="2752.5" y="1121.5" font-size="20.93" fill="#5a6170" textLength="46.5" lengthAdjust="spacingAndGlyphs" stroke="#5a6170" stroke-width="0.4">17:10</text><line x1="2895.4" y1="848.0" x2="2895.4" y2="1121.5" stroke="#aaabb0" stroke-width="1.8" /><text x="2900.1" y="1121.5" font-size="20.93" fill="#5a6170" textLength="46.5" lengthAdjust="spacingAndGlyphs" stroke="#5a6170" stroke-width="0.4">17:15</text><text x="2545.7" y="1141.5" font-size="20.93" fill="#5a6170" textLength="173.9" lengthAdjust="spacingAndGlyphs" stroke="#5a6170" stroke-width="0.4">November 6, 2024</text><polygon points="2585.6,888.5 2602.2,898.6 2618.8,898.6 2635.4,898.6 2652.0,898.6 2668.6,898.6 2685.2,898.6 2701.8,898.6 2718.4,898.6 2735.0,898.6 2751.6,898.6 2768.2,898.6 2784.8,898.6 2801.4,898.6 2818.0,898.6 2834.6,898.6 2851.2,898.6 2867.8,898.6 2884.4,898.6 2901.0,898.6 2917.6,898.6 2934.2,898.6 2950.8,898.6 2967.4,898.6 2984.0,898.6 2984.0,907.6 2967.4,907.6 2950.8,907.6 2934.2,907.6 2917.6,907.6 2901.0,907.6 2884.4,907.6 2867.8,907.6 2851.2,907.6 2834.6,907.6 2818.0,907.6 2801.4,907.6 2784.8,907.6 2768.2,907.6 2751.6,907.6 2735.0,907.6 2718.4,907.6 2701.8,907.6 2685.2,907.6 2668.6,907.6 2652.0,907.6 2635.4,907.6 2618.8,907.6 2602.2,907.6 2585.6,896.0" fill="rgb(192,177,197)" fill-opacity="0.6"/><polygon points="2585.6,896.0 2602.2,907.6 2618.8,907.6 2635.4,907.6 2652.0,907.6 2668.6,907.6 2685.2,907.6 2701.8,907.6 2718.4,907.6 2735.0,907.6 2751.6,907.6 2768.2,907.6 2784.8,907.6 2801.4,907.6 2818.0,907.6 2834.6,907.6 2851.2,907.6 2867.8,907.6 2884.4,907.6 2901.0,907.6 2917.6,907.6 2934.2,907.6 2950.8,907.6 2967.4,907.6 2969.0,907.6 2969.0,1098.0 2585.6,1098.0" fill="rgb(130,117,147)" fill-opacity="0.6"/><polygon points="2969.0,907.6 2984.0,907.6 2984.0,1098.0 2969.0,1098.0" fill="rgb(172,143,172)" fill-opacity="0.6"/><polyline points="2585.6,888.5 2602.2,898.6 2618.8,898.6 2635.4,898.6 2652.0,898.6 2668.6,898.6 2685.2,898.6 2701.8,898.6 2718.4,898.6 2735.0,898.6 2751.6,898.6 2768.2,898.6 2784.8,898.6 2801.4,898.6 2818.0,898.6 2834.6,898.6 2851.2,898.6 2867.8,898.6 2884.4,898.6 2901.0,898.6 2917.6,898.6 2934.2,898.6 2950.8,898.6 2967.4,898.6 2984.0,898.6" fill="none" stroke="#c8628a" stroke-width="4.2" stroke-linejoin="round" /><polyline points="2585.6,896.0 2602.2,907.6 2618.8,907.6 2635.4,907.6 2652.0,907.6 2668.6,907.6 2685.2,907.6 2701.8,907.6 2718.4,907.6 2735.0,907.6 2751.6,907.6 2768.2,907.6 2784.8,907.6 2801.4,907.6 2818.0,907.6 2834.6,907.6 2851.2,907.6 2867.8,907.6 2884.4,907.6 2901.0,907.6 2917.6,907.6 2934.2,907.6 2950.8,907.6 2967.4,907.6 2984.0,907.6" fill="none" stroke="#8081b1" stroke-width="4.2" stroke-linejoin="round" /><polyline points="2585.6,886.5 2599.5,893.0 2969.0,893.0" fill="none" stroke="#6db39a" stroke-width="4.2" stroke-linejoin="round" /><polyline points="2585.6,888.5 2599.5,898.6 2984.0,898.6" fill="none" stroke="#c8628a" stroke-width="4.2" stroke-linejoin="round" /><text x="2519.5" y="854.0" font-size="21.66" fill="#5a6170" text-anchor="end" textLength="65.7" lengthAdjust="spacingAndGlyphs" stroke="#5a6170" stroke-width="0.4">10.00%</text><text x="2519.5" y="904.0" font-size="21.66" fill="#5a6170" text-anchor="end" textLength="55.0" lengthAdjust="spacingAndGlyphs" stroke="#5a6170" stroke-width="0.4">8.00%</text><text x="2519.5" y="954.0" font-size="21.66" fill="#5a6170" text-anchor="end" textLength="55.0" lengthAdjust="spacingAndGlyphs" stroke="#5a6170" stroke-width="0.4">6.00%</text><text x="2519.5" y="1004.0" font-size="21.66" fill="#5a6170" text-anchor="end" textLength="55.0" lengthAdjust="spacingAndGlyphs" stroke="#5a6170" stroke-width="0.4">4.00%</text><text x="2519.5" y="1054.0" font-size="21.66" fill="#5a6170" text-anchor="end" textLength="55.0" lengthAdjust="spacingAndGlyphs" stroke="#5a6170" stroke-width="0.4">2.00%</text><text x="2519.5" y="1104.0" font-size="21.66" fill="#5a6170" text-anchor="end" textLength="55.0" lengthAdjust="spacingAndGlyphs" stroke="#5a6170" stroke-width="0.4">0.00%</text><text transform="translate(2411.4,972.7) rotate(-90)" x="0" y="0" font-size="26.45" font-weight="700" fill="#343741" text-anchor="middle" textLength="131.3" lengthAdjust="spacingAndGlyphs">% FS usage</text></svg></div><div class="panel" style="left:7px;top:1200px;width:3030px;height:208px;"><svg width="3030" height="208" viewBox="7 1200 3030 208"><text x="41.5" y="1274.0" font-size="39.97" fill="#343741" font-weight="700" textLength="337.0" lengthAdjust="spacingAndGlyphs" stroke="#343741" stroke-width="0.6">Workload overview</text></svg></div><div class="panel" style="left:7px;top:1424px;width:682px;height:320px;"><svg width="682" height="320" viewBox="7 1424 682 320"><text x="26.0" y="1458.0" font-size="25.87" fill="#1a1c21" font-weight="700" textLength="447.0" lengthAdjust="spacingAndGlyphs" stroke="#1a1c21" stroke-width="0.55">Container Restarts by Pod and Reason</text><circle cx="496.1" cy="1449.9" r="11.0" fill="none" stroke="#535966" stroke-width="1.7"/><circle cx="496.1" cy="1444.4" r="1.5" fill="#535966"/><path d="M492.8 1448.9 H496.1 V1456.3000000000002 M493.90000000000003 1456.3000000000002 H499.70000000000005" fill="none" stroke="#535966" stroke-width="1.7"/><path d="M639.5 1425 H677 A12 12 0 0 1 689 1437 V1474.5 H651.5 A12 12 0 0 1 639.5 1462.5 Z" fill="#e9ecf2"/><rect x="648.1" y="1447.0" width="6.0" height="6.0" fill="none" stroke="#343741" stroke-width="2"/><rect x="660.1" y="1447.0" width="6.0" height="6.0" fill="none" stroke="#343741" stroke-width="2"/><rect x="672.1" y="1447.0" width="6.0" height="6.0" fill="none" stroke="#343741" stroke-width="2"/><line x1="45.0" y1="1510.0" x2="45.0" y2="1658.0" stroke="#e3e6ec" stroke-width="1.6" /><line x1="45.0" y1="1658.0" x2="650.5" y2="1658.0" stroke="#e3e6ec" stroke-width="2" /><text x="49.4" y="1681.0" font-size="20.93" fill="#5a6170" textLength="49.0" lengthAdjust="spacingAndGlyphs" stroke="#5a6170" stroke-width="0.4">17:00</text><line x1="122.7" y1="1658.0" x2="122.7" y2="1681.0" stroke="#b3b4b8" stroke-width="1.8" /><text x="127.7" y="1681.0" font-size="20.93" fill="#5a6170" textLength="48.0" lengthAdjust="spacingAndGlyphs" stroke="#5a6170" stroke-width="0.4">17:05</text><line x1="318.4" y1="1658.0" x2="318.4" y2="1681.0" stroke="#b3b4b8" stroke-width="1.8" /><text x="323.4" y="1681.0" font-size="20.93" fill="#5a6170" textLength="48.0" lengthAdjust="spacingAndGlyphs" stroke="#5a6170" stroke-width="0.4">17:10</text><line x1="514.0" y1="1658.0" x2="514.0" y2="1681.0" stroke="#b3b4b8" stroke-width="1.8" /><text x="519.0" y="1681.0" font-size="20.93" fill="#5a6170" textLength="48.0" lengthAdjust="spacingAndGlyphs" stroke="#5a6170" stroke-width="0.4">17:15</text><text x="49.4" y="1702.0" font-size="20.93" fill="#5a6170" textLength="174.0" lengthAdjust="spacingAndGlyphs" stroke="#5a6170" stroke-width="0.4">November 6, 2024</text></svg></div><div class="panel" style="left:705px;top:1424px;width:492px;height:320px;"><svg width="492" height="320" viewBox="705 1424 492 320"><text x="723.0" y="1458.0" font-size="25.87" fill="#1a1c21" font-weight="700" textLength="58.8" lengthAdjust="spacingAndGlyphs" stroke="#1a1c21" stroke-width="0.55">Pods</text><circle cx="950.8" cy="1608" r="75.50" fill="none" stroke="#86caaf" stroke-width="81.40"/><text x="947.4" y="1686.5" font-size="28.78" fill="#000" text-anchor="middle" textLength="131.0" lengthAdjust="spacingAndGlyphs">Running <tspan font-weight="700">54</tspan></text></svg></div><div class="panel" style="left:1213px;top:1424px;width:428px;height:320px;"><svg width="428" height="320" viewBox="1213 1424 428 320"><text x="1231.5" y="1458.0" font-size="25.87" fill="#1a1c21" font-weight="700" textLength="154.5" lengthAdjust="spacingAndGlyphs" stroke="#1a1c21" stroke-width="0.55">Deployments</text><circle cx="1426.8" cy="1608" r="75.50" fill="none" stroke="#86caaf" stroke-width="81.40"/><text x="1423.4" y="1682.9" font-size="28.78" fill="#000" text-anchor="middle" textLength="117.5" lengthAdjust="spacingAndGlyphs">Ready <tspan font-weight="700">18</tspan></text></svg></div><div class="panel" style="left:1657px;top:1424px;width:428px;height:320px;"><svg width="428" height="320" viewBox="1657 1424 428 320"><text x="1675.5" y="1458.0" font-size="25.87" fill="#1a1c21" font-weight="700" textLength="149.0" lengthAdjust="spacingAndGlyphs" stroke="#1a1c21" stroke-width="0.55">DaemonSets</text><circle cx="1870.6" cy="1608" r="75.50" fill="none" stroke="#86caaf" stroke-width="81.40"/><text x="1867.2" y="1682.9" font-size="28.78" fill="#000" text-anchor="middle" textLength="116.0" lengthAdjust="spacingAndGlyphs">Ready <tspan font-weight="700">28</tspan></text></svg></div><div class="panel" style="left:2101px;top:1424px;width:428px;height:320px;"><svg width="428" height="320" viewBox="2101 1424 428 320"><text x="2119.5" y="1458.0" font-size="25.87" fill="#1a1c21" font-weight="700" textLength="145.0" lengthAdjust="spacingAndGlyphs" stroke="#1a1c21" stroke-width="0.55">StatefulSets</text><circle cx="2314.5" cy="1608" r="75.50" fill="none" stroke="#86caaf" stroke-width="81.40"/><text x="2311.1" y="1682.9" font-size="28.78" fill="#000" text-anchor="middle" textLength="103.0" lengthAdjust="spacingAndGlyphs">Ready <tspan font-weight="700">3</tspan></text></svg></div><div class="panel" style="left:2545px;top:1424px;width:492px;height:320px;"><svg width="492" height="320" viewBox="2545 1424 492 320"><text x="2563.5" y="1458.0" font-size="25.87" fill="#1a1c21" font-weight="700" textLength="138.5" lengthAdjust="spacingAndGlyphs" stroke="#1a1c21" stroke-width="0.55">ReplicaSets</text><circle cx="2790.4" cy="1608" r="75.50" fill="none" stroke="#86caaf" stroke-width="81.40"/><text x="2787.0" y="1682.9" font-size="28.78" fill="#000" text-anchor="middle" textLength="118.0" lengthAdjust="spacingAndGlyphs">Ready <tspan font-weight="700">26</tspan></text></svg></div><div class="panel" style="left:7px;top:1760px;width:682px;height:543px;"><svg width="682" height="543" viewBox="7 1760 682 543"><text x="25.7" y="1794.0" font-size="25.87" fill="#1a1c21" font-weight="700" textLength="389.3" lengthAdjust="spacingAndGlyphs" stroke="#1a1c21" stroke-width="0.55">Top CPU intensive pods per Node</text><circle cx="436.7" cy="1786.3" r="11.0" fill="none" stroke="#535966" stroke-width="1.7"/><circle cx="436.7" cy="1780.8" r="1.5" fill="#535966"/><path d="M433.4 1785.3 H436.7 V1792.7 M434.5 1792.7 H440.3" fill="none" stroke="#535966" stroke-width="1.7"/><line x1="88.6" y1="1846.4" x2="88.6" y2="2209.6" stroke="#e3e6ec" stroke-width="1.6" /><line x1="88.6" y1="2209.6" x2="626.5" y2="2209.6" stroke="#e3e6ec" stroke-width="2" /><rect x="89.6" y="1850.8" width="497.8" height="26.8" fill="#6db09a" /><text x="318.6" y="1869.7" font-size="21.22" fill="#000" text-anchor="middle" textLength="43.0" lengthAdjust="spacingAndGlyphs">3.7%</text><rect x="89.6" y="1887.2" width="491.6" height="26.8" fill="#6db09a" /><text x="315.8" y="1906.1" font-size="21.22" fill="#000" text-anchor="middle" textLength="43.0" lengthAdjust="spacingAndGlyphs">3.7%</text><rect x="89.6" y="1923.6" width="455.2" height="26.8" fill="#6db09a" /><text x="297.5" y="1942.5" font-size="21.22" fill="#000" text-anchor="middle" textLength="44.0" lengthAdjust="spacingAndGlyphs">3.4%</text><rect x="89.6" y="1960.0" width="302.8" height="26.8" fill="#6db09a" /><text x="221.5" y="1978.9" font-size="21.22" fill="#000" text-anchor="middle" textLength="44.0" lengthAdjust="spacingAndGlyphs">2.3%</text><rect x="89.6" y="1996.4" width="245.1" height="26.8" fill="#6db09a" /><text x="192.3" y="2015.3" font-size="21.22" fill="#000" text-anchor="middle" textLength="41.0" lengthAdjust="spacingAndGlyphs">1.8%</text><rect x="89.6" y="2032.8" width="188.8" height="26.8" fill="#6db09a" /><text x="164.0" y="2051.7" font-size="21.22" fill="#000" text-anchor="middle" textLength="41.0" lengthAdjust="spacingAndGlyphs">1.4%</text><rect x="89.6" y="2069.2" width="76.9" height="26.8" fill="#6db09a" /><rect x="89.6" y="2105.6" width="69.4" height="26.8" fill="#6db09a" /><rect x="89.6" y="2142.0" width="61.1" height="26.8" fill="#6db09a" /><rect x="89.6" y="2178.4" width="60.4" height="26.8" fill="#6db09a" /><text x="88.6" y="2246.2" font-size="20.93" fill="#5a6170" text-anchor="middle" textLength="44.0" lengthAdjust="spacingAndGlyphs" stroke="#5a6170" stroke-width="0.4">0.0%</text><text x="223.1" y="2246.2" font-size="20.93" fill="#5a6170" text-anchor="middle" textLength="44.0" lengthAdjust="spacingAndGlyphs" stroke="#5a6170" stroke-width="0.4">1.0%</text><text x="357.6" y="2246.2" font-size="20.93" fill="#5a6170" text-anchor="middle" textLength="44.0" lengthAdjust="spacingAndGlyphs" stroke="#5a6170" stroke-width="0.4">2.0%</text><text x="492.0" y="2246.2" font-size="20.93" fill="#5a6170" text-anchor="middle" textLength="44.0" lengthAdjust="spacingAndGlyphs" stroke="#5a6170" stroke-width="0.4">3.0%</text><text x="626.5" y="2246.2" font-size="20.93" fill="#5a6170" text-anchor="middle" textLength="44.0" lengthAdjust="spacingAndGlyphs" stroke="#5a6170" stroke-width="0.4">4.0%</text><text transform="translate(63.5,2026.7) rotate(-90)" x="0" y="0" font-size="26.45" font-weight="700" fill="#343741" text-anchor="middle" textLength="144.0" lengthAdjust="spacingAndGlyphs">% CPU Node</text></svg></div><div class="panel" style="left:705px;top:1760px;width:746px;height:543px;"><svg width="746" height="543" viewBox="705 1760 746 543"><text x="724.0" y="1794.0" font-size="25.87" fill="#1a1c21" font-weight="700" textLength="436.0" lengthAdjust="spacingAndGlyphs" stroke="#1a1c21" stroke-width="0.55">Top CPU intensive pods per Pod Limit</text><circle cx="1182" cy="1785.7" r="11.0" fill="none" stroke="#535966" stroke-width="1.7"/><circle cx="1182" cy="1780.2" r="1.5" fill="#535966"/><path d="M1178.7 1784.7 H1182 V1792.1000000000001 M1179.8 1792.1000000000001 H1185.6" fill="none" stroke="#535966" stroke-width="1.7"/><line x1="786.4" y1="1846.0" x2="786.4" y2="2265.7" stroke="#e3e6ec" stroke-width="1.6" /><line x1="786.4" y1="2265.7" x2="1413.0" y2="2265.7" stroke="#e3e6ec" stroke-width="2" /><rect x="787.4" y="1853.6" width="566.2" height="44.6" fill="#6db09a" /><text x="1046.4" y="1882.6" font-size="24.71" fill="#000" text-anchor="middle" textLength="47.0" lengthAdjust="spacingAndGlyphs">9.1%</text><rect x="787.4" y="1913.6" width="477.6" height="44.6" fill="#6db09a" /><text x="1001.8" y="1942.6" font-size="24.71" fill="#000" text-anchor="middle" textLength="49.0" lengthAdjust="spacingAndGlyphs">7.6%</text><rect x="787.4" y="1973.6" width="308.6" height="44.6" fill="#6db09a" /><text x="917.5" y="2002.6" font-size="24.71" fill="#000" text-anchor="middle" textLength="53.0" lengthAdjust="spacingAndGlyphs">4.9%</text><rect x="787.4" y="2033.6" width="282.2" height="44.6" fill="#6db09a" /><text x="904.3" y="2062.6" font-size="24.71" fill="#000" text-anchor="middle" textLength="52.0" lengthAdjust="spacingAndGlyphs">4.5%</text><rect x="787.4" y="2093.6" width="187.6" height="44.6" fill="#6db09a" /><text x="857.0" y="2122.6" font-size="24.71" fill="#000" text-anchor="middle" textLength="52.0" lengthAdjust="spacingAndGlyphs">3.0%</text><rect x="787.4" y="2153.6" width="18.0" height="44.6" fill="#6db09a" /><rect x="787.4" y="2213.6" width="12.2" height="44.6" fill="#6db09a" /><text transform="translate(762.3,2055.0) rotate(-90)" x="0" y="0" font-size="26.45" font-weight="700" fill="#343741" text-anchor="middle" textLength="184.0" lengthAdjust="spacingAndGlyphs">% CPU Pod limit</text></svg></div><div class="panel" style="left:1467px;top:1760px;width:808px;height:543px;"><svg width="808" height="543" viewBox="1467 1760 808 543"><text x="1485.7" y="1794.0" font-size="25.87" fill="#1a1c21" font-weight="700" textLength="435.3" lengthAdjust="spacingAndGlyphs" stroke="#1a1c21" stroke-width="0.55">Top Memory intensive pods per Node</text><circle cx="1942.6" cy="1786" r="11.0" fill="none" stroke="#535966" stroke-width="1.7"/><circle cx="1942.6" cy="1780.5" r="1.5" fill="#535966"/><path d="M1939.3 1785 H1942.6 V1792.4 M1940.3999999999999 1792.4 H1946.1999999999998" fill="none" stroke="#535966" stroke-width="1.7"/><line x1="1549.0" y1="1846.4" x2="1549.0" y2="2265.3" stroke="#e3e6ec" stroke-width="1.6" /><line x1="1549.0" y1="2265.3" x2="2237.0" y2="2265.3" stroke="#e3e6ec" stroke-width="2" /><rect x="1550.0" y="1851.4" width="609.7" height="31.2" fill="#6db09a" /><text x="1831.6" y="1873.7" font-size="24.71" fill="#000" text-anchor="middle" textLength="58.0" lengthAdjust="spacingAndGlyphs">10.7%</text><rect x="1550.0" y="1893.3" width="572.0" height="31.2" fill="#6db09a" /><text x="1813.0" y="1915.6" font-size="24.71" fill="#000" text-anchor="middle" textLength="59.0" lengthAdjust="spacingAndGlyphs">10.0%</text><rect x="1550.0" y="1935.2" width="520.6" height="31.2" fill="#6db09a" /><text x="1788.0" y="1957.5" font-size="24.71" fill="#000" text-anchor="middle" textLength="44.0" lengthAdjust="spacingAndGlyphs">9.1%</text><rect x="1550.0" y="1977.1" width="69.5" height="31.2" fill="#6db09a" /><rect x="1550.0" y="2019.0" width="68.0" height="31.2" fill="#6db09a" /><rect x="1550.0" y="2060.9" width="67.5" height="31.2" fill="#6db09a" /><rect x="1550.0" y="2102.8" width="65.6" height="31.2" fill="#6db09a" /><rect x="1550.0" y="2144.7" width="62.0" height="31.2" fill="#6db09a" /><rect x="1550.0" y="2186.6" width="61.4" height="31.2" fill="#6db09a" /><rect x="1550.0" y="2228.5" width="58.7" height="31.2" fill="#6db09a" /><text transform="translate(1523.2,2055.6) rotate(-90)" x="0" y="0" font-size="26.45" font-weight="700" fill="#343741" text-anchor="middle" textLength="190.4" lengthAdjust="spacingAndGlyphs">% Memory Node</text></svg></div><div class="panel" style="left:2291px;top:1760px;width:746px;height:543px;"><svg width="746" height="543" viewBox="2291 1760 746 543"><text x="2309.6" y="1794.0" font-size="25.87" fill="#1a1c21" font-weight="700" textLength="482.4" lengthAdjust="spacingAndGlyphs" stroke="#1a1c21" stroke-width="0.55">Top Memory intensive pods per Pod Limit</text><circle cx="2814" cy="1786" r="11.0" fill="none" stroke="#535966" stroke-width="1.7"/><circle cx="2814" cy="1780.5" r="1.5" fill="#535966"/><path d="M2810.7 1785 H2814 V1792.4 M2811.8 1792.4 H2817.6" fill="none" stroke="#535966" stroke-width="1.7"/><line x1="2372.7" y1="1846.2" x2="2372.7" y2="2265.7" stroke="#e3e6ec" stroke-width="1.6" /><line x1="2372.7" y1="2265.7" x2="2998.5" y2="2265.7" stroke="#e3e6ec" stroke-width="2" /><rect x="2373.7" y="1851.0" width="517.2" height="31.5" fill="#6db09a" /><text x="2609.0" y="1873.5" font-size="24.71" fill="#000" text-anchor="middle" textLength="61.0" lengthAdjust="spacingAndGlyphs">82.7%</text><rect x="2373.7" y="1893.1" width="483.2" height="31.5" fill="#6db09a" /><text x="2592.0" y="1915.5" font-size="24.71" fill="#000" text-anchor="middle" textLength="59.0" lengthAdjust="spacingAndGlyphs">77.3%</text><rect x="2373.7" y="1935.2" width="443.9" height="31.5" fill="#6db09a" /><text x="2572.7" y="1957.7" font-size="24.71" fill="#000" text-anchor="middle" textLength="58.0" lengthAdjust="spacingAndGlyphs">71.0%</text><rect x="2373.7" y="1977.3" width="265.1" height="31.5" fill="#6db09a" /><text x="2483.0" y="1999.8" font-size="24.71" fill="#000" text-anchor="middle" textLength="62.0" lengthAdjust="spacingAndGlyphs">42.5%</text><rect x="2373.7" y="2019.4" width="219.5" height="31.5" fill="#6db09a" /><text x="2461.0" y="2041.9" font-size="24.71" fill="#000" text-anchor="middle" textLength="62.0" lengthAdjust="spacingAndGlyphs">35.2%</text><rect x="2373.7" y="2061.5" width="216.7" height="31.5" fill="#6db09a" /><text x="2459.4" y="2083.9" font-size="24.71" fill="#000" text-anchor="middle" textLength="61.0" lengthAdjust="spacingAndGlyphs">34.7%</text><rect x="2373.7" y="2103.6" width="212.8" height="31.5" fill="#6db09a" /><text x="2457.6" y="2126.0" font-size="24.71" fill="#000" text-anchor="middle" textLength="57.0" lengthAdjust="spacingAndGlyphs">34.1%</text><rect x="2373.7" y="2145.7" width="92.1" height="31.5" fill="#6db09a" /><rect x="2373.7" y="2187.8" width="90.6" height="31.5" fill="#6db09a" /><rect x="2373.7" y="2229.9" width="90.3" height="31.5" fill="#6db09a" /><text transform="translate(2346.6,2054.6) rotate(-90)" x="0" y="0" font-size="26.45" font-weight="700" fill="#343741" text-anchor="middle" textLength="236.0" lengthAdjust="spacingAndGlyphs">% Memory Pod Limit</text></svg></div><div id="fade"></div></body></html>
